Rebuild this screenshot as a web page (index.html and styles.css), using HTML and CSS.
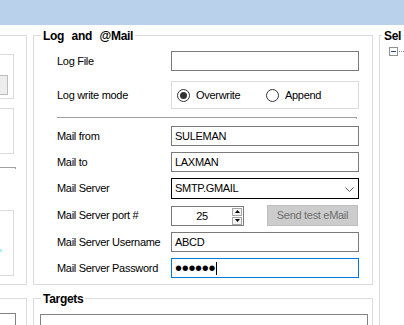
FILE: index.html
```html
<!DOCTYPE html>
<html>
<head>
<meta charset="utf-8">
<link rel="stylesheet" href="styles.css">
</head>
<body>
<div class="titlebar"></div>
<div class="workspace">
  <div class="col col-left">
    <div class="group group-left-top">
      <div class="pane pane-a"><div class="pane-field"></div></div>
      <div class="pane pane-b"></div>
      <div class="rule rule-left"></div>
      <div class="pane pane-c"><span class="cyan-dot"></span></div>
    </div>
    <div class="group group-left-bottom">
      <div class="list-box list-left"></div>
    </div>
  </div>

  <div class="col col-mid">
    <div class="group group-mail">
      <div class="group-title">Log and @Mail</div>
      <div class="form">
        <div class="row row-logfile">
          <span class="label">Log File</span>
          <div class="textbox"></div>
        </div>
        <div class="row row-mode">
          <span class="label">Log write mode</span>
          <div class="radio-panel">
            <label class="radio-item radio-first"><span class="radio checked"></span><span>Overwrite</span></label>
            <label class="radio-item"><span class="radio"></span><span>Append</span></label>
          </div>
        </div>
        <div class="separator"></div>
        <div class="mail-rows">
          <div class="row row-20">
            <span class="label">Mail from</span>
            <div class="textbox">SULEMAN</div>
          </div>
          <div class="row row-20">
            <span class="label">Mail to</span>
            <div class="textbox">LAXMAN</div>
          </div>
          <div class="row row-21">
            <span class="label">Mail Server</span>
            <div class="combo">
              <span>SMTP.GMAIL</span>
              <svg class="chevron" width="9" height="5" viewBox="0 0 9 5"><path d="M0.5 0.5 L4.5 4.5 L8.5 0.5" fill="none" stroke="#5a5a5a" stroke-width="1"/></svg>
            </div>
          </div>
          <div class="row row-21 row-port">
            <span class="label">Mail Server port #</span>
            <div class="numeric">
              <span class="numeric-value">25</span>
              <div class="spin">
                <span class="spin-btn"><svg width="5" height="3" viewBox="0 0 5 3"><path d="M0 3 L2.5 0 L5 3 Z" fill="#000"/></svg></span>
                <span class="spin-btn"><svg width="5" height="3" viewBox="0 0 5 3"><path d="M0 0 L5 0 L2.5 3 Z" fill="#000"/></svg></span>
              </div>
            </div>
            <button class="btn-test" disabled>Send test eMail</button>
          </div>
          <div class="row row-20">
            <span class="label">Mail Server Username</span>
            <div class="textbox">ABCD</div>
          </div>
          <div class="row row-20">
            <span class="label">Mail Server Password</span>
            <div class="textbox focused"><span class="dots">••••••</span><span class="caret"></span></div>
          </div>
        </div>
      </div>
    </div>
    <div class="group group-targets">
      <div class="group-title">Targets</div>
      <div class="list-box list-targets"></div>
    </div>
  </div>

  <div class="col col-right">
    <div class="group group-right">
      <div class="group-title">Sel</div>
      <div class="tree-row">
        <span class="tree-toggle"><span class="tree-minus"></span></span>
        <span class="tree-dots"></span>
      </div>
    </div>
  </div>
</div>
</body>
</html>
```

FILE: styles.css
```css
* { box-sizing: border-box; }
html, body { margin: 0; padding: 0; }
body {
  width: 404px;
  height: 325px;
  overflow: hidden;
  background: #ffffff;
  font-family: "Liberation Sans", Arial, sans-serif;
  font-size: 11px;
  letter-spacing: -0.3px;
  color: #000;
}
.titlebar { height: 25px; background: #B9D1EA; }
.workspace { display: flex; gap: 6px; padding-top: 10px; height: 300px; overflow: hidden; }
.col { display: flex; flex-direction: column; flex: none; }
.col-left { width: 27px; }
.col-mid { width: 340px; }
.col-right { flex: 1; min-width: 0; }

.group { border: 1px solid #DCDCDC; display: flex; flex-direction: column; flex: none; }
.group-title {
  align-self: flex-start;
  margin: -7px 0 0 7px;
  padding: 0 2px;
  background: #fff;
  font-size: 12px;
  font-weight: bold;
  line-height: 14px;
  height: 14px;
  word-spacing: 4.5px;
  white-space: nowrap;
}

/* left column */
.group-left-top { height: 250px; border-left: none; align-items: flex-end; }
.pane { border: 1px solid #DCDCDC; width: 60px; margin-right: 12px; flex: none; display: flex; flex-direction: column; align-items: flex-end; }
.pane-a { margin-top: 18px; height: 45px; }
.pane-field { margin-top: 20px; margin-right: 5px; width: 40px; height: 20px; border: 1px solid #BDBDBD; background: #EDEDED; }
.pane-b { margin-top: 9px; height: 46px; }
.rule-left { margin-top: 13px; margin-right: 10px; width: 40px; height: 2px; border-top: 1px solid #A0A0A0; border-right: 1px solid #A0A0A0; flex: none; }
.pane-c { margin-top: 41px; height: 66px; }
.cyan-dot { display: block; margin-top: 38px; margin-right: 11px; width: 2px; height: 3px; background: #A8F2F2; }
.group-left-bottom { margin-top: 13px; border-left: none; border-bottom: none; flex: 1; min-height: 0; align-items: flex-end; }
.list-box { border: 1px solid #828282; border-bottom: none; height: 12px; flex: none; }
.list-left { margin-top: 14px; margin-right: 10px; width: 40px; }

/* middle column */
.group-mail { height: 250px; }
.form { padding-left: 23px; display: flex; flex-direction: column; }
.row { display: flex; align-items: center; flex: none; }
.label { width: 114px; flex: none; line-height: 13px; white-space: nowrap; }
.row-logfile { margin-top: 8px; height: 20px; }
.row-mode { margin-top: 10px; height: 28px; }
.row-20 { height: 20px; }
.row-21 { height: 21px; }
.separator { margin-top: 8px; width: 300px; height: 2px; border-top: 1px solid #A0A0A0; border-right: 1px solid #A0A0A0; flex: none; }
.mail-rows { margin-top: 7px; display: flex; flex-direction: column; gap: 6px; }

.textbox {
  width: 188px; height: 20px;
  border: 1px solid #7A7A7A;
  padding: 0 3px;
  display: flex; align-items: center;
  line-height: 13px;
  background: #fff;
}
.textbox.focused { border-color: #0078D7; }
.dots { font-size: 20px; line-height: 18px; height: 18px; letter-spacing: -0.3px; }
.caret { display: inline-block; width: 1px; height: 13px; background: #000; margin-left: 1px; }

.radio-panel { width: 188px; height: 28px; border: 1px solid #DCDCDC; display: flex; align-items: center; padding-left: 5px; }
.radio-item { display: flex; align-items: center; gap: 6px; line-height: 13px; }
.radio-first { width: 89px; }
.radio { width: 13px; height: 13px; border-radius: 50%; border: 1px solid #333; display: flex; align-items: center; justify-content: center; background: #fff; flex: none; }
.radio.checked::after { content: ""; width: 7px; height: 7px; border-radius: 50%; background: #333; }

.combo {
  width: 188px; height: 21px;
  border: 1px solid #000;
  display: flex; align-items: center; justify-content: space-between;
  padding: 0 4px 0 3px;
  line-height: 13px;
}
.chevron { display: block; margin-top: 1px; }

.row-port { align-items: flex-start; }
.row-port .label { align-self: center; }
.numeric {
  width: 73px; height: 20px; margin-top: 1px;
  border: 1px solid #7A7A7A;
  display: flex; align-items: center;
  padding: 0 1px 0 0;
}
.numeric-value { flex: 1; text-align: center; line-height: 13px; }
.spin { width: 10px; height: 17px; display: flex; flex-direction: column; gap: 1px; }
.spin-btn { flex: 1; border: 1px solid #A5A5A5; background: #F3F3F3; display: flex; align-items: center; justify-content: center; }
.spin-btn svg { display: block; }
.btn-test {
  margin-left: 23px;
  width: 91px; height: 21px;
  border: 1px solid #BFBFBF;
  background: #CCCCCC;
  color: #6D6D6D;
  font-family: "Liberation Sans", Arial, sans-serif;
  font-size: 11px;
  letter-spacing: -0.3px;
  padding: 0;
  line-height: 13px;
}

.group-targets { margin-top: 13px; border-bottom: none; flex: 1; min-height: 0; }
.list-targets { margin: 8px 4px 0 6px; height: 11px; }

/* right column */
.group-right { height: 300px; border-right: none; border-bottom: none; }
.group-right .group-title { margin-left: 2px; }
.tree-row { margin-top: 4px; padding-left: 9px; display: flex; align-items: center; height: 9px; }
.tree-toggle { width: 9px; height: 9px; border: 1px solid #919191; display: flex; align-items: center; justify-content: center; flex: none; }
.tree-minus { width: 5px; height: 1px; background: #2B4A8C; }
.tree-dots { width: 7px; height: 1px; margin-left: 1px; background-image: linear-gradient(to right, #8C8C8C 1px, transparent 1px); background-size: 2px 1px; }
```
